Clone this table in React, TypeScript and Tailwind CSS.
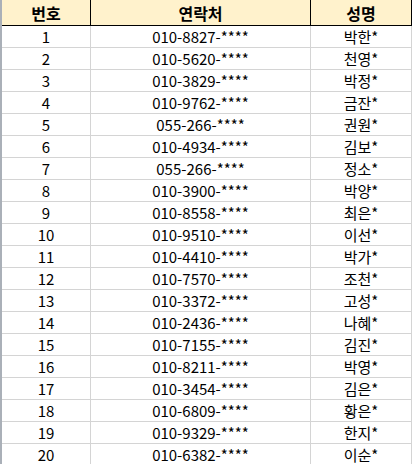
const rows: [number, string, string][] = [
  [1, "010-8827-****", "박한*"],
  [2, "010-5620-****", "천영*"],
  [3, "010-3829-****", "박정*"],
  [4, "010-9762-****", "금잔*"],
  [5, "055-266-****", "권원*"],
  [6, "010-4934-****", "김보*"],
  [7, "055-266-****", "정소*"],
  [8, "010-3900-****", "박양*"],
  [9, "010-8558-****", "최은*"],
  [10, "010-9510-****", "이선*"],
  [11, "010-4410-****", "박가*"],
  [12, "010-7570-****", "조천*"],
  [13, "010-3372-****", "고성*"],
  [14, "010-2436-****", "나혜*"],
  [15, "010-7155-****", "김진*"],
  [16, "010-8211-****", "박영*"],
  [17, "010-3454-****", "김은*"],
  [18, "010-6809-****", "황은*"],
  [19, "010-9329-****", "한지*"],
  [20, "010-6382-****", "이순*"],
];

const font = {
  fontFamily: '"Noto Sans CJK KR", sans-serif',
};

export default function App() {
  return (
    <div className="w-[413px] h-[464px] overflow-hidden bg-white flex" style={font}>
      <div className="w-[2px] bg-[#aab0b8] shrink-0" />
      <div className="w-[410px] shrink-0 flex flex-col">
        <div className="flex h-[26px] shrink-0 bg-[#fff2cc] border-b border-black text-[16px] font-bold text-black leading-none">
          <div className="w-[89px] border-r border-black flex items-center justify-center">번호</div>
          <div className="w-[220px] border-r border-black flex items-center justify-center">연락처</div>
          <div className="w-[101px] border-r border-black flex items-center justify-center">성명</div>
        </div>
        {rows.map(([n, phone, name]) => (
          <div key={n} className="flex h-[22px] shrink-0 border-b border-[#d4d4d4] text-[15px] text-black leading-none">
            <div className="w-[89px] border-r border-[#d4d4d4] flex items-center justify-center">{n}</div>
            <div className="w-[220px] border-r border-[#d4d4d4] flex items-center justify-center">{phone}</div>
            <div className="w-[101px] border-r border-[#d4d4d4] flex items-center justify-center">{name}</div>
          </div>
        ))}
      </div>
    </div>
  );
}
